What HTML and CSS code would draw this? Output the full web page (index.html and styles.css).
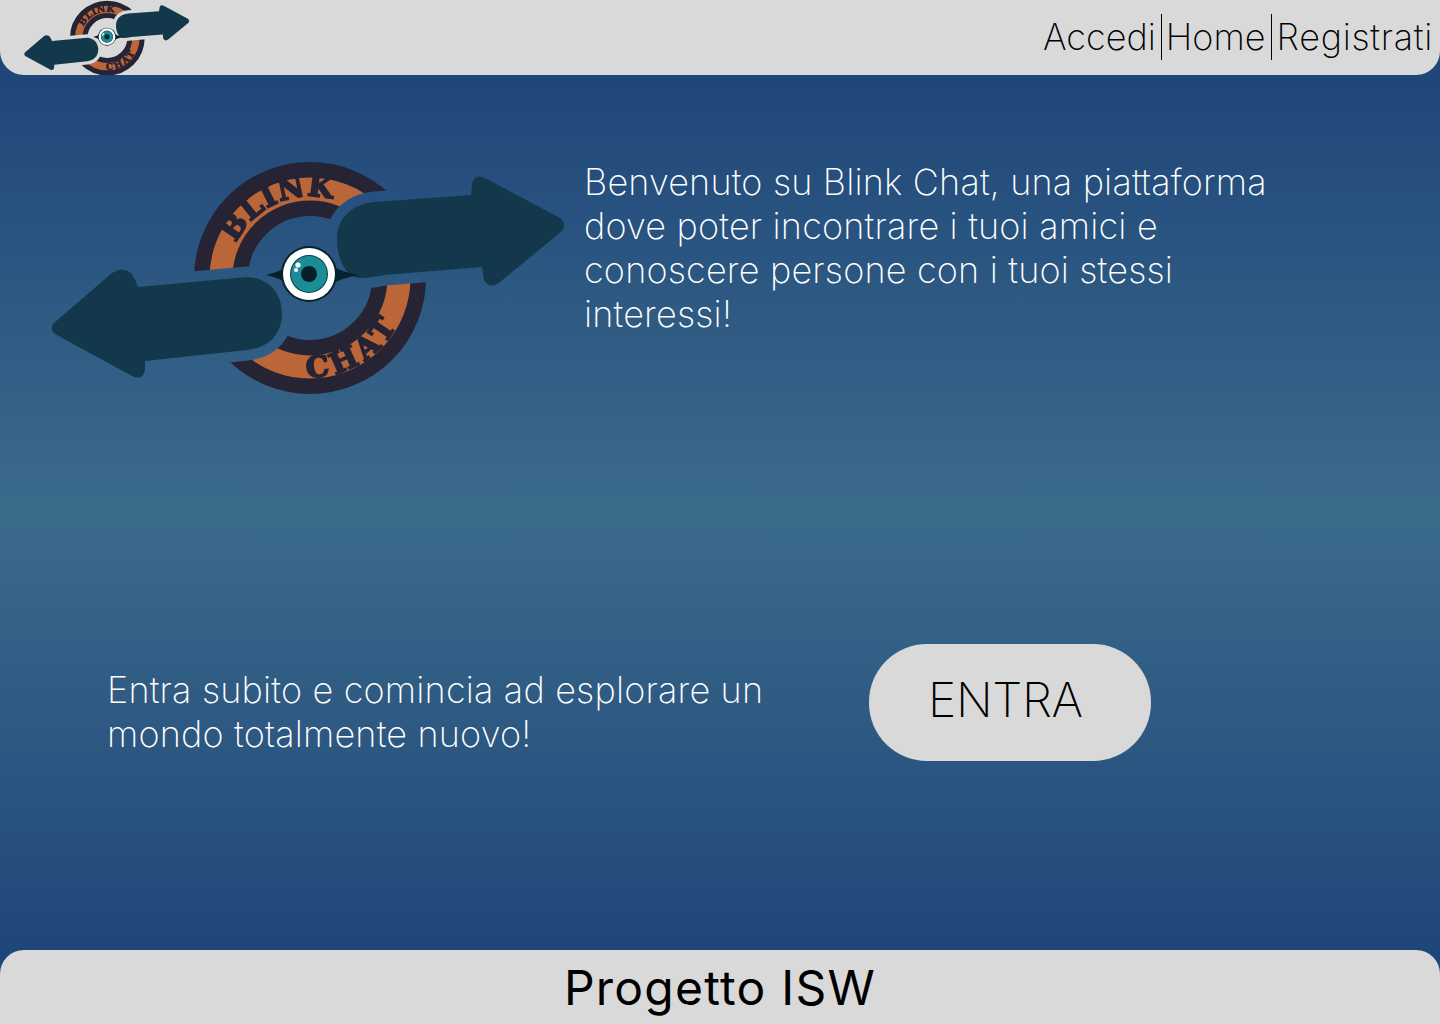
FILE: index.html
```html
<!DOCTYPE html>
<html lang="it">
<head>
<meta charset="utf-8">
<title>Blink Chat</title>
<link rel="stylesheet" href="styles.css">
</head>
<body>
<svg class="defs" width="0" height="0" aria-hidden="true">
  <defs>
    <path id="arrow-r" d="M325 42 L421 35 L422 24 Q424 13 435 18 L510 58 Q517 63 512 71 L450 122 Q440 130 434 120 L432 107 L335 115 Q320 118 311 118 C295 118 287 98 287 79 C287 58 302 44 325 42 Z"/>
    <path id="arrow-l" d="M197 117 C220 118 232 135 232 153 C232 175 218 188 197 190 L95 201 L95 210 Q93 221 82 216 L5 174 Q-1 169 4 163 L62 113 Q72 106 81 113 Q86 120 88 127 Z"/>
    <mask id="halo" maskUnits="userSpaceOnUse" x="0" y="0" width="515" height="236">
      <rect width="515" height="236" fill="#fff"/>
      <use href="#arrow-r" fill="#000" stroke="#000" stroke-width="21" stroke-linejoin="round"/>
      <use href="#arrow-l" fill="#000" stroke="#000" stroke-width="21" stroke-linejoin="round"/>
    </mask>
    <path id="arc-top" d="M186 83 A82 82 0 0 1 342 118"/>
    <path id="arc-bottom" d="M257 217 A99 99 0 0 0 359 118"/>
    <symbol id="logo" viewBox="0 0 515 236">
      <g mask="url(#halo)">
        <circle class="ring-dark" cx="260" cy="118" r="89"/>
        <circle class="ring-orange" cx="260" cy="118" r="89"/>
        <text class="logo-text"><textPath href="#arc-top">BLINK</textPath></text>
        <text class="logo-text logo-text-wide"><textPath href="#arc-bottom">CHAT</textPath></text>
      </g>
      <use href="#arrow-r" class="arrow"/>
      <use href="#arrow-l" class="arrow"/>
      <path class="eye-lid" d="M216 115 Q240 110 259 88 Q278 110 309 115 Q278 120 259 142 Q240 120 216 115 Z"/>
      <circle class="eye-lid" cx="259" cy="114" r="28"/>
      <circle class="eye-white" cx="259" cy="114" r="26"/>
      <circle class="eye-edge" cx="259" cy="114" r="19"/>
      <circle class="eye-iris" cx="259" cy="114" r="18"/>
      <circle class="eye-pupil" cx="259" cy="114" r="8"/>
      <circle class="eye-white" cx="248" cy="105" r="2.6"/>
      <circle class="eye-white" cx="246" cy="110" r="2"/>
    </symbol>
  </defs>
</svg>

<header class="topbar">
  <svg class="logo-small" viewBox="0 0 515 236" role="img" aria-label="Blink Chat"><use href="#logo"/></svg>
  <nav class="nav">
    <a class="nav-link" href="#">Accedi</a>
    <a class="nav-link nav-link-home" href="#">Home</a>
    <a class="nav-link nav-link-wide" href="#">Registrati</a>
  </nav>
</header>

<main class="main">
  <section class="hero">
    <svg class="logo-big" viewBox="0 0 515 236" role="img" aria-label="Blink Chat"><use href="#logo"/></svg>
    <p class="lead hero-text">Benvenuto su Blink Chat, una piattaforma dove poter incontrare i tuoi amici e conoscere persone con i tuoi stessi interessi!</p>
  </section>
  <section class="cta">
    <p class="lead cta-text">Entra subito e comincia ad esplorare un mondo totalmente nuovo!</p>
    <a class="cta-button" href="#">ENTRA</a>
  </section>
</main>

<footer class="footer">Progetto ISW</footer>
</body>
</html>
```

FILE: styles.css
```css
* { box-sizing: border-box; }
html, body { margin: 0; padding: 0; }
body {
  width: 1440px;
  height: 1024px;
  overflow: hidden;
  display: flex;
  flex-direction: column;
  font-family: "Inter", "Liberation Sans", sans-serif;
  background: #1f4679;
}
.defs { position: absolute; }

.topbar {
  height: 75px;
  flex: none;
  display: flex;
  justify-content: space-between;
  align-items: center;
  padding: 0 7px 0 23px;
  background: #d9d9d9;
  border-radius: 0 0 24px 24px;
}
.logo-small { width: 167px; height: 76px; display: block; }
.nav { display: flex; align-items: center; margin-bottom: 2px; }
.nav-link {
  height: 46px;
  line-height: 46px;
  font-size: 36px;
  font-weight: 200;
  color: #000;
  text-decoration: none;
  padding: 0 5px;
  border-right: 1px solid #000;
}
.nav-link-home { padding: 0 6px 0 4px; }
.nav-link-wide { border-right: 0; padding: 0 0 0 4px; letter-spacing: 0.7px; }

.main {
  flex: 1;
  background: linear-gradient(180deg, #1f4679 0%, #3b6b8b 50%, #1f4679 100%);
}
.hero {
  display: flex;
  align-items: flex-start;
  gap: 19px;
  padding: 85px 0 0 50px;
}
.logo-big { width: 515px; height: 236px; flex: none; display: block; }
.lead {
  margin: 0;
  width: 700px;
  font-size: 36px;
  line-height: 44px;
  font-weight: 200;
  letter-spacing: 0.18px;
  color: #fff;
}
.cta {
  display: flex;
  align-items: flex-start;
  gap: 62px;
  margin-top: 248px;
  padding-left: 107px;
}
.cta-text { margin-top: 24px; }
.cta-button {
  width: 282px;
  height: 117px;
  padding-left: 59px;
  line-height: 111px;
  border-radius: 58px;
  background: #d9d9d9;
  color: #000;
  font-size: 48px;
  font-weight: 200;
  letter-spacing: -0.4px;
  text-decoration: none;
}

.footer {
  height: 74px;
  flex: none;
  background: #d9d9d9;
  border-radius: 24px 24px 0 0;
  text-align: center;
  font-size: 48px;
  line-height: 76px;
  letter-spacing: 1.25px;
  color: #000;
}

.ring-dark { fill: none; stroke: #262335; stroke-width: 54; }
.ring-orange { fill: none; stroke: #bb6639; stroke-width: 23; }
.logo-text {
  font-family: "DejaVu Serif", "Liberation Serif", serif;
  font-weight: 700;
  font-size: 29px;
  letter-spacing: 1px;
  fill: #262335;
  stroke: #262335;
  stroke-width: 1.8;
}
.logo-text-wide { letter-spacing: 5px; }
.arrow { fill: #14384b; }
.eye-lid { fill: #06222e; }
.eye-white { fill: #fff; }
.eye-edge { fill: #0d3b48; }
.eye-iris { fill: #1a8d97; }
.eye-pupil { fill: #06202b; }
```
